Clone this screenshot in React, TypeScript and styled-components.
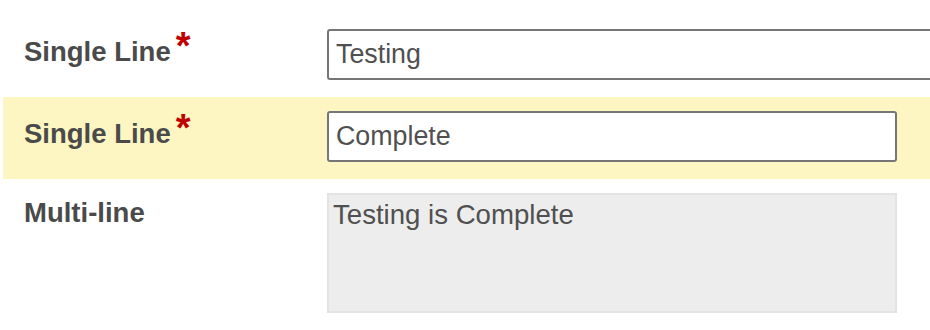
import React from 'react';
import styled, {createGlobalStyle} from 'styled-components';

const GlobalStyle = createGlobalStyle`
    html, body {
        margin: 0;
        padding: 0;
        background: #ffffff;
        overflow: hidden;
    }
`;

interface rowProps {
    $highlight?: boolean;
}

interface inputProps {
    $wide?: boolean;
}

const Form = styled.form`
    width: 927px;
    margin: 15px 0 0 3px;
    font-family: 'Liberation Sans', Arial, sans-serif;
`;

const Row = styled.div<rowProps>`
    display: grid;
    grid-template-columns: 324px 1fr;
    align-items: start;
    padding: 14px 0 17px;
    background: ${props => (props.$highlight ? '#fdf6c3' : 'transparent')};
`;

const Label = styled.label`
    padding: 4px 0 0 21px;
    font-size: 27.5px;
    font-weight: bold;
    color: #4a4a4a;
    white-space: nowrap;
`;

const Required = styled.span`
    margin-left: 5px;
    font-size: 38px;
    line-height: 26px;
    color: #c00000;
    vertical-align: 2px;
`;

const Field = styled.div`
    min-width: 0;
`;

const TextInput = styled.input<inputProps>`
    box-sizing: border-box;
    width: ${props => (props.$wide ? '640px' : '570px')};
    height: 51px;
    padding: 0 7px;
    border: 2px solid #767676;
    border-radius: 3px;
    background: #ffffff;
    font-family: inherit;
    font-size: 26.8px;
    color: #505050;
    outline: none;
`;

const TextArea = styled.textarea`
    box-sizing: border-box;
    display: block;
    width: 570px;
    height: 120px;
    padding: 4px 4px;
    border: 2px solid #e3e3e3;
    border-radius: 0;
    background: #ededed;
    font-family: inherit;
    font-size: 27.6px;
    line-height: normal;
    color: #505050;
    resize: none;
    outline: none;
`;

const App = () => {
    return (
        <>
            <GlobalStyle />
            <Form>
                <Row>
                    <Label>
                        Single Line<Required>*</Required>
                    </Label>
                    <Field>
                        <TextInput $wide defaultValue={'Testing'} />
                    </Field>
                </Row>
                <Row $highlight>
                    <Label>
                        Single Line<Required>*</Required>
                    </Label>
                    <Field>
                        <TextInput defaultValue={'Complete'} />
                    </Field>
                </Row>
                <Row>
                    <Label>Multi-line</Label>
                    <Field>
                        <TextArea readOnly defaultValue={'Testing is Complete'} />
                    </Field>
                </Row>
            </Form>
        </>
    );
};

export default App;
